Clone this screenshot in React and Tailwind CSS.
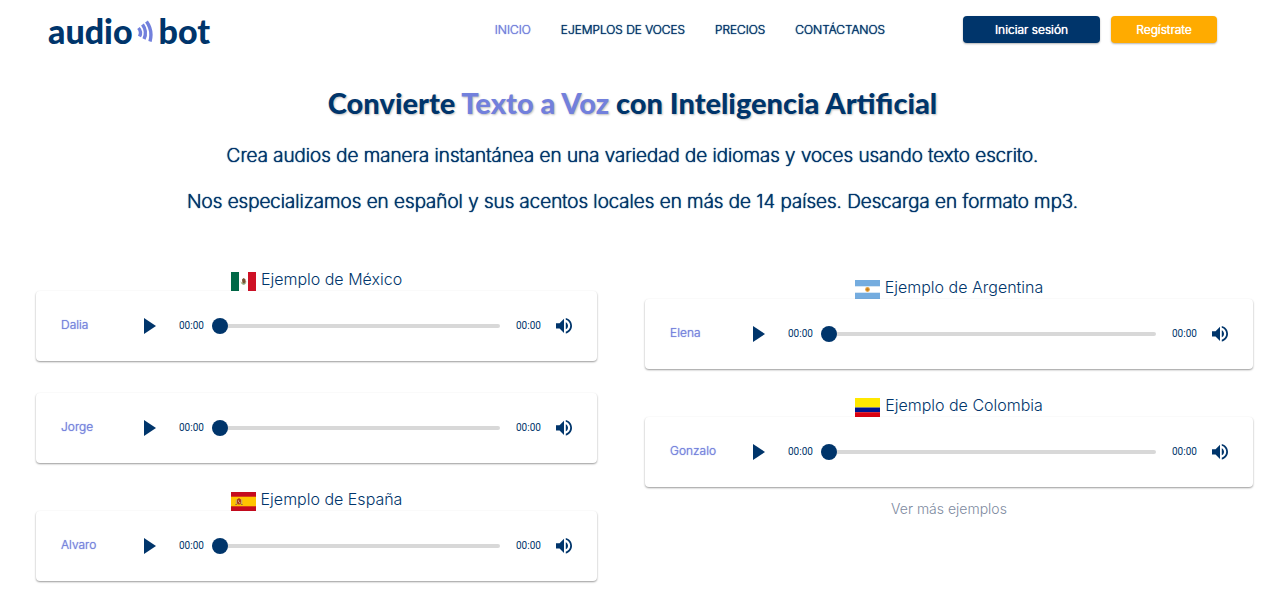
import { useState } from "react";
import clsx from "clsx";

const NAV_LINKS = ["INICIO", "EJEMPLOS DE VOCES", "PRECIOS", "CONTÁCTANOS"];

const LEFT_EXAMPLES = [
  { country: "México", flag: "mx", voices: ["Dalia", "Jorge"] },
  { country: "España", flag: "es", voices: ["Alvaro"] },
];

const RIGHT_EXAMPLES = [
  { country: "Argentina", flag: "ar", voices: ["Elena"] },
  { country: "Colombia", flag: "co", voices: ["Gonzalo"] },
];

const Flag = ({ code }) => (
  <svg viewBox="0 0 25 19" preserveAspectRatio="none" className="h-[19px] w-[25px]" aria-hidden="true">
    {code === "mx" && (
      <>
        <path fill="#fff" d="M0 0h25v19H0z" />
        <path fill="#006847" d="M0 0h8v19H0z" />
        <path fill="#ce1126" d="M17 0h8v19h-8z" />
        <path fill="#a3a878" d="M9.500 9q.5 3.600 3.200 3.800q2.400-.2 2.800-3.800l-1 1.500h-4z" />
        <path fill="#7a5232" d="M11 7.500l1.600-1.500 1.800 1.300.4 2.700-1.800 1.400-1.600-1z" />
        <path fill="#4fa6a0" d="M12 11.500h1.300v.8H12z" />
      </>
    )}
    {code === "es" && (
      <>
        <path fill="#c60b1e" d="M0 0h25v19H0z" />
        <path fill="#ffc400" d="M0 4.700h25v9.600H0z" />
        <path fill="#ad3a19" d="M6 7.500l2-1.500 2 1.500v4l-2 1.300-2-1.300z" />
        <path fill="#b89a80" d="M4.800 7.500h.9v5h-.9zM10.300 7.500h.9v5h-.9z" />
        <path fill="#8a5a2b" d="M4.300 12h1.900v.8H4.300zM9.800 12h1.900v.8H9.800z" />
        <path fill="#dbb9a0" d="M7 8.500h1v1.200H7zM8.200 10h1v1.200h-1z" />
      </>
    )}
    {code === "ar" && (
      <>
        <path fill="#74acdf" d="M0 0h25v19H0z" />
        <path fill="#fff" d="M0 6.300h25v6.400H0z" />
        <circle cx="12.500" cy="9.500" r="2.400" fill="#e8a33c" />
        <circle cx="12.500" cy="9.500" r="1.300" fill="#c07a1e" />
      </>
    )}
    {code === "co" && (
      <>
        <path fill="#ffe800" d="M0 0h25v9.500H0z" />
        <path fill="#00148e" d="M0 9.500h25v4.700H0z" />
        <path fill="#da0010" d="M0 14.200h25V19H0z" />
      </>
    )}
  </svg>
);

const Logo = () => (
  <a
    href="#inicio"
    aria-label="audiobot"
    className="flex items-center pt-0.5 font-['Lato'] text-[34px] leading-8 font-black text-[#00356b]"
  >
    <span>audio</span>
    <svg viewBox="0 0 16 22" className="mr-1.5 ml-1 h-[22px] w-4" fill="none" stroke="#7280dc" strokeWidth="3.400">
      <path d="M1.500 8q3.500 4 1 8.500" />
      <path d="M5.500 4.500q5 7 1.500 14.500" />
      <path d="M9.500 1.500q6.500 9 3.500 20" />
    </svg>
    <span>bot</span>
  </a>
);

const AudioPlayer = ({ name }) => {
  const [playing, setPlaying] = useState(false);
  const [position, setPosition] = useState(0);

  return (
    <div className="flex h-[70px] items-center rounded-sm bg-white px-[25px] shadow-[0_1px_2px_rgba(0,0,0,0.4)]">
      <span className="w-[83px] pb-0.5 text-[12px] leading-4 font-light text-[#7280dc] [text-shadow:0_0_1px_currentColor]">
        {name}
      </span>
      <button type="button" aria-label={`Reproducir ${name}`} aria-pressed={playing} onClick={() => setPlaying(!playing)}>
        <svg viewBox="0 0 18 24" className="h-4 w-3" fill="#00356b">
          <path d="M18 12L0 24V0" />
        </svg>
      </button>
      <span className="ml-[23px] w-[25px] font-['Roboto'] text-[10px] leading-4">00:00</span>
      <input
        type="range"
        min="0"
        max="100"
        value={position}
        onChange={(e) => setPosition(Number(e.target.value))}
        aria-label={`Posición de ${name}`}
        className="mr-4 ml-2 h-1 min-w-0 flex-1 appearance-none rounded-xs bg-[#d8d8d8] [&::-webkit-slider-thumb]:size-4 [&::-webkit-slider-thumb]:appearance-none [&::-webkit-slider-thumb]:rounded-full [&::-webkit-slider-thumb]:bg-[#00356b]"
      />
      <span className="mr-[15px] w-[25px] font-['Roboto'] text-[10px] leading-4">00:00</span>
      <button type="button" aria-label="Volumen">
        <svg viewBox="0 0 24 24" className="size-4" fill="#00356b">
          <path d="M14.667 0v2.747c3.853 1.146 6.666 4.720 6.666 8.946 0 4.227-2.813 7.787-6.666 8.934v2.760C20 22.173 24 17.400 24 11.693 24 5.987 20 1.213 14.667 0zM18 11.693c0-2.360-1.333-4.386-3.333-5.373v10.707c2-.947 3.333-2.987 3.333-5.334zm-18-4v8h5.333L12 22.360V1.027L5.333 7.693H0z" />
        </svg>
      </button>
    </div>
  );
};

const ExampleGroup = ({ country, flag, voices }) => (
  <section>
    <h2 className="flex h-6 items-end justify-center gap-[5px] text-[16px] leading-6 font-light">
      <Flag code={flag} />
      <span>Ejemplo de {country}</span>
    </h2>
    <div className="flex flex-col gap-8">
      {voices.map((voice) => (
        <AudioPlayer key={voice} name={voice} />
      ))}
    </div>
  </section>
);

export default function App() {
  return (
    <div className="min-h-screen bg-white pr-[15px] font-['Inter',sans-serif] text-[#00356b]">
      <header className="flex h-[59px] items-center pr-12 pl-12">
        <Logo />
        <nav className="mr-[78px] ml-auto flex gap-[30px] text-[12px] leading-4 font-extralight [text-shadow:0_0_0_currentColor,0_0_1px_currentColor,0_0_1px_currentColor]">
          {NAV_LINKS.map((link, i) => (
            <a key={link} href="#" className={clsx(i === 0 && "text-[#7280dc]")}>
              {link}
            </a>
          ))}
        </nav>
        <div className="flex gap-[11px] text-[12px] leading-[27px] font-light text-white">
          <button
            type="button"
            className="w-[137px] rounded-sm bg-[#00356b] shadow-[0_1px_2px_rgba(0,0,0,0.3)] [text-shadow:0_0_0_currentColor,0_0_1px_currentColor]"
          >
            Iniciar sesión
          </button>
          <button
            type="button"
            className="w-[106px] rounded-sm bg-[#ffab00] shadow-[0_1px_2px_rgba(0,0,0,0.3)] [text-shadow:0_0_0_currentColor,0_0_1px_currentColor]"
          >
            Regístrate
          </button>
        </div>
      </header>

      <main>
        <div className="pt-6 text-center">
          <h1 className="font-['Lato'] text-[29px] leading-10 font-black [text-shadow:1px_1px_2px_rgba(0,0,0,0.25)]">
            Convierte <span className="text-[#7280dc]">Texto a Voz</span> con Inteligencia Artificial
          </h1>
          <div className="mt-[18px] flex flex-col gap-4 text-[19px] leading-[30px] font-extralight [text-shadow:0_0_0_currentColor,0_0_1px_currentColor,0_0_1px_currentColor]">
            <p>Crea audios de manera instantánea en una variedad de idiomas y voces usando texto escrito.</p>
            <p>Nos especializamos en español y sus acentos locales en más de 14 países. Descarga en formato mp3.</p>
          </div>
        </div>

        <div className="mt-[50px] grid grid-cols-[561fr_608fr] gap-12 pr-3 pl-9">
          <div className="flex flex-col gap-6">
            {LEFT_EXAMPLES.map((example) => (
              <ExampleGroup key={example.flag} {...example} />
            ))}
          </div>
          <div className="flex flex-col gap-6 pt-2">
            {RIGHT_EXAMPLES.map((example) => (
              <ExampleGroup key={example.flag} {...example} />
            ))}
            <a href="#" className="-mt-3 self-center text-[14px] leading-5 font-light text-[#7d8aa0]">
              Ver más ejemplos
            </a>
          </div>
        </div>
      </main>
    </div>
  );
}
